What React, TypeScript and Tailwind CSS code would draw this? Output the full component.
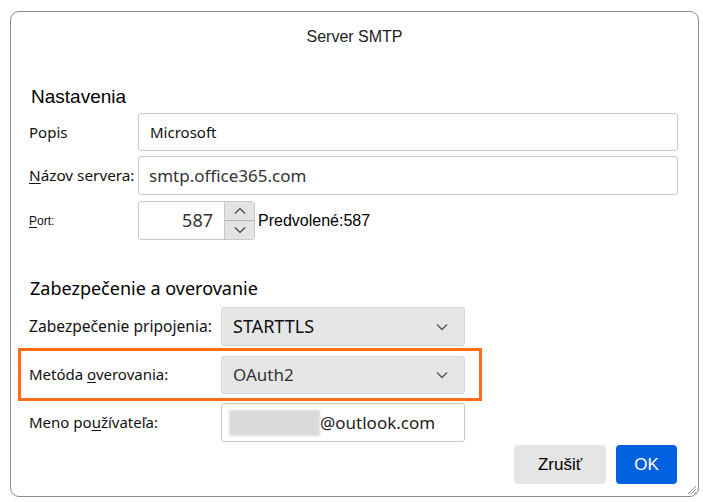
import React from "react";

const seg = { fontFamily: '"Noto Sans", "Open Sans", sans-serif' };
const ari = { fontFamily: '"Liberation Sans", Arial, sans-serif' };

function Chevron() {
  return (
    <svg width="12" height="8" viewBox="0 0 12 8" className="block">
      <path d="M1 1.5 L6 6.5 L11 1.5" fill="none" stroke="#555" strokeWidth="1.3" />
    </svg>
  );
}

function Select({ value, dim }: { value: string; dim?: boolean }) {
  return (
    <div className="flex h-full w-[244px] items-center justify-between rounded-[3px] border border-[#d6d6d6] bg-[#e6e6e6] pl-[11px] pr-[16px]">
      <span className={`${dim ? "text-[17px] text-[#333]" : "text-[18px] text-[#111]"}`} style={seg}>
        {value}
      </span>
      <Chevron />
    </div>
  );
}

export default function App() {
  return (
    <div className="h-[502px] w-[703px] bg-white pl-[10px] pt-[11px]">
      <div className="relative flex h-[486px] w-[689px] flex-col rounded-[9px] border border-[#8c8c8c] bg-white">
        <div className="flex h-[50px] items-center justify-center text-[16px] text-[#222]" style={ari}>
          Server SMTP
        </div>

        <div className="ml-[20px] mt-[23px] flex h-[24px] items-center text-[19px] text-black" style={ari}>
          Nastavenia
        </div>

        <div className="mt-[4px] flex h-[38px] items-center">
          <div className="w-[127px] pl-[18px] text-[15px] text-[#111]" style={seg}>Popis</div>
          <div className="flex h-full w-[540px] items-center rounded-[3px] border border-[#c8c8c8] pl-[11px] text-[15px] text-[#111]" style={seg}>
            Microsoft
          </div>
        </div>

        <div className="mt-[5px] flex h-[39px] items-center">
          <div className="w-[127px] pl-[18px] text-[15.3px] text-[#111]" style={seg}>
            <span className="underline underline-offset-2">N</span>ázov servera:
          </div>
          <div className="flex h-full w-[540px] items-center rounded-[3px] border border-[#c8c8c8] pl-[10px] text-[17px] text-[#333]" style={seg}>
            smtp.office365.com
          </div>
        </div>

        <div className="mt-[6px] flex h-[39px] items-center">
          <div className="w-[127px] pl-[18px] text-[12px] text-[#111]" style={ari}>
            <span className="underline underline-offset-2">P</span>ort:
          </div>
          <div className="flex h-full w-[117px] rounded-[3px] border border-[#c8c8c8]">
            <div className="flex flex-1 items-center justify-end pr-[11px] text-[18px] text-[#333]" style={seg}>587</div>
            <div className="flex w-[30px] flex-col border-l border-[#c8c8c8]">
              <div className="flex flex-1 items-center justify-center border-b border-[#b5b5b5] bg-[#e3e3e3]">
                <svg width="12" height="8" viewBox="0 0 12 8"><path d="M1 6.5 L6 1.5 L11 6.5" fill="none" stroke="#444" strokeWidth="1.2" /></svg>
              </div>
              <div className="flex flex-1 items-center justify-center bg-[#e3e3e3]">
                <svg width="12" height="8" viewBox="0 0 12 8"><path d="M1 1.5 L6 6.5 L11 1.5" fill="none" stroke="#444" strokeWidth="1.2" /></svg>
              </div>
            </div>
          </div>
          <div className="ml-[3px] text-[16px] text-black" style={ari}>Predvolené:587</div>
        </div>

        <div className="ml-[19px] mt-[36px] flex h-[24px] items-center text-[18px] text-black" style={seg}>
          Zabezpečenie a overovanie
        </div>

        <div className="mt-[7px] flex h-[39px] items-center">
          <div className="w-[210px] pl-[18px] text-[15.6px] text-[#111]" style={seg}>Zabezpečenie pripojenia:</div>
          <Select value="STARTTLS" />
        </div>

        <div className="ml-[7px] mt-[2px] flex h-[53px] w-[464px] items-center border-[3px] border-[#ff6b17]">
          <div className="w-[200px] pl-[8px] text-[15px] text-[#111]" style={seg}>
            Metóda <span className="underline underline-offset-2">o</span>verovania:
          </div>
          <div className="h-[38px]">
            <Select value="OAuth2" dim />
          </div>
        </div>

        <div className="mt-[2px] flex h-[39px] items-center">
          <div className="w-[210px] pl-[18px] text-[15px] text-[#111]" style={seg}>
            Meno po<span className="underline underline-offset-2">u</span>žívateľa:
          </div>
          <div className="flex h-full w-[244px] items-center rounded-[3px] border border-[#c8c8c8] pl-[7px]">
            <div className="h-[26px] w-[91px] bg-[#dadada] blur-[1px]" />
            <span className="text-[17px] text-[#222]" style={seg}>@outlook.com</span>
          </div>
        </div>

        <div className="mr-[21px] mt-[3px] flex justify-end gap-[10px]">
          <div className="flex h-[39px] w-[92px] items-center justify-center rounded-[4px] bg-[#e5e5e5] text-[17px] text-black" style={ari}>
            Zrušiť
          </div>
          <div className="flex h-[39px] w-[61px] items-center justify-center rounded-[4px] bg-[#0061e0] text-[17px] text-white" style={ari}>
            OK
          </div>
        </div>

        <svg className="absolute bottom-[1px] right-[1px]" width="12" height="12" viewBox="0 0 12 12">
          <path d="M11 3 L3 11 M11 6 L6 11 M11 9 L9 11" stroke="#9a9a9a" strokeWidth="1" />
        </svg>
      </div>
    </div>
  );
}
